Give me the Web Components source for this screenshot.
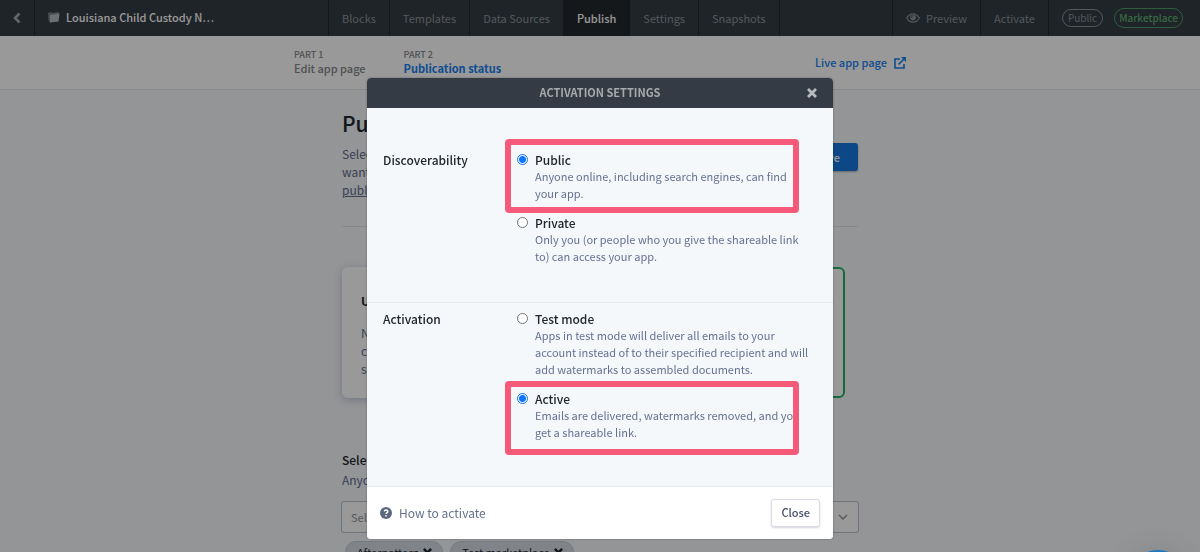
<!DOCTYPE html>
<html lang="en">
<head>
<meta charset="utf-8">
<meta name="viewport" content="width=device-width, initial-scale=1">
<title>Activation settings</title>
<style>
  html, body { margin: 0; height: 100%; overflow: hidden; }
  body { background: #f6f8fb; color: #20262c; font: 400 12px/17px "Noto Sans CJK SC", "Open Sans", sans-serif; }
</style>
</head>
<body>
<builder-nav></builder-nav>
<part-nav></part-nav>
<publish-page></publish-page>
<modal-dialog heading="Activation settings">
  <settings-section label="Discoverability" style="--pad: 44px 16px 37px">
    <radio-option name="disc" label="Public" checked marked style="--mark-top: -13px">Anyone online, including search engines, can find<br>your app.</radio-option>
    <radio-option name="disc" label="Private">Only you (or people who you give the shareable link<br>to) can access your app.</radio-option>
  </settings-section>
  <settings-section label="Activation" style="--pad: 8px 16px 45px">
    <radio-option name="act" label="Test mode">Apps in test mode will deliver all emails to your<br>account instead of to their specified recipient and will<br>add watermarks to assembled documents.</radio-option>
    <radio-option name="act" label="Active" checked marked style="--mark-top: -10px">Emails are delivered, watermarks removed, and you<br>get a shareable link.</radio-option>
  </settings-section>
</modal-dialog>
<chat-launcher></chat-launcher>

<script>
const define = (name, html) => customElements.define(name, class extends HTMLElement {
  constructor() {
    super();
    this.attachShadow({ mode: "open" }).innerHTML = typeof html === "function" ? html(this) : html;
  }
});
const cross = (size) => `<svg width="${size}" height="${size}" viewBox="0 0 10 10" aria-hidden="true"><path d="M2 2l6 6M8 2l-6 6" stroke="currentColor" stroke-width="2.8" stroke-linecap="square" fill="none"/></svg>`;

define("nav-tab", `
<style>
  :host { display: flex; border-right: 1px solid #23282d; font-size: 11px; }
  a { display: flex; align-items: center; gap: 6px; padding: 0 13px; color: #8d9398; text-decoration: none; }
  :host([active]) a { background: #23282d; color: #fff; font-weight: 500; }
</style>
<a href="#"><slot></slot></a>`);

define("status-pill", `
<style>
  :host { display: block; box-sizing: border-box; border: 1px solid #8d9398; color: #8d9398; border-radius: 10px; padding: 0 5px; font-size: 10px; line-height: 16px; }
  :host([kind=market]) { border-color: #4f9d68; color: #5fae74; padding: 0 4px; line-height: 18px; font-weight: 500; }
</style><slot></slot>`);

define("builder-nav", `
<style>
  :host { display: flex; height: 36px; background: #343c44; color: #8d9398; }
  .title { flex: 0 0 294px; box-sizing: border-box; display: flex; align-items: center; gap: 6px; padding: 0 0 2px 12px; border-right: 1px solid #23282d; color: #fff; font-size: 11px; font-weight: 500; }
  nav { display: flex; }
  .right { margin-left: auto; border-left: 1px solid #23282d; }
  .pills { display: flex; align-items: center; gap: 11px; padding: 0 17px 0 13px; }
  svg { display: block; flex: none; }
</style>
<nav-tab aria-label="Back"><svg width="8" height="12" viewBox="0 0 8 12"><path d="M6.500 1.500L2 6l4.500 4.500" fill="none" stroke="#a5a9ac" stroke-width="2.600"/></svg></nav-tab>
<div class="title"><svg width="13" height="12" viewBox="0 0 13 12"><path d="M1 2l3-1 1 1 6-1 1 1-1 8-8 1.500L1.500 10z" fill="#788087"/><path d="M3 4l9.500-1.500-1 8L3 11.500z" fill="#b4bbc0"/></svg><span>Louisiana Child Custody N…</span></div>
<nav>
  <nav-tab>Blocks</nav-tab><nav-tab>Templates</nav-tab><nav-tab>Data Sources</nav-tab><nav-tab active>Publish</nav-tab><nav-tab>Settings</nav-tab><nav-tab>Snapshots</nav-tab>
</nav>
<nav class="right">
  <nav-tab><svg width="14" height="10" viewBox="0 0 14 10"><path d="M.7 5C2.200 2.300 4.400.8 7 .8S11.800 2.300 13.300 5C11.800 7.700 9.600 9.200 7 9.200S2.200 7.700.7 5z" fill="none" stroke="currentColor" stroke-width="1.300"/><circle cx="7" cy="4.600" r="2.900" fill="currentColor"/><path d="M5.300 4.500A1.700 1.700 0 0 1 7 2.900" stroke="#343c44" fill="none" stroke-width=".8"/></svg>Preview</nav-tab>
  <nav-tab>Activate</nav-tab>
  <div class="pills"><status-pill>Public</status-pill><status-pill kind="market">Marketplace</status-pill></div>
</nav>`);

define("part-nav", `
<style>
  :host { display: block; background: #fff; border-bottom: 1px solid #e4e7ea; }
  nav { max-width: 612px; height: 53px; margin: 0 auto; display: flex; gap: 38px; align-items: center; }
  a { color: #858789; text-decoration: none; font-size: 11px; font-weight: 500; line-height: 15px; padding-bottom: 1px; }
  small { display: block; font-size: 9px; line-height: 13px; color: #858789; }
  .on, .live { color: #1880f0; }
  .on { font-weight: 700; }
  .on small { font-weight: 500; }
  .live { margin-left: auto; padding: 0; display: flex; gap: 7px; align-items: center; }
</style>
<nav>
  <a href="#"><small>PART 1</small>Edit app page</a>
  <a href="#" class="on"><small>PART 2</small>Publication status</a>
  <a href="#" class="live">Live app page<svg width="12" height="12" viewBox="0 0 12 12" fill="none" stroke="currentColor" stroke-width="1.600"><path d="M6 2H1v9h9V7M4.500 7.500L10.500 1.500"/><path d="M7 0h5v5z" fill="currentColor" stroke="none"/></svg></a>
</nav>`);

define("choice-card", `
<style>
  :host { display: block; box-sizing: border-box; height: 131px; padding: 24px 19px; background: #fff; border-radius: 6px; box-shadow: 0 2px 8px rgba(60,80,120,.3); color: #5f6b8c; line-height: 18px; }
  :host([selected]) { border: 2px solid #20b26b; box-shadow: none; }
  b { display: block; color: #20262c; line-height: 20px; margin-bottom: 13px; }
</style><b><slot name="title"></slot></b><slot></slot>`);

define("tag-chip", `
<style>
  :host { display: flex; align-items: center; gap: 4px; height: 22px; padding: 0 10px 0 11px; border-radius: 11px; background: #d5dde3; border: 1px solid #c3ccd3; box-sizing: border-box; font-size: 11px; }
  button { border: 0; padding: 0; background: none; color: inherit; display: flex; }
</style><slot></slot><button aria-label="Remove">${cross(9)}</button>`);

define("publish-page", `
<style>
  :host { display: block; max-width: 518px; margin: 0 auto; padding-top: 18px; }
  header { display: flex; justify-content: space-between; align-items: flex-start; height: 119px; border-bottom: 1px solid #e0e4e9; box-sizing: border-box; margin: 0 1px; }
  h1 { font-size: 21px; line-height: 30px; font-weight: 500; margin: 0 0 7px; }
  p { margin: 0; color: #5f6b8c; line-height: 18px; }
  p a { color: inherit; }
  .save { font: inherit; font-size: 11px; font-weight: 500; color: #fff; background: #1478e0; border: 0; border-radius: 3px; height: 28px; margin-top: 35px; padding: 0 18px; box-shadow: 0 1px 2px rgba(0,0,0,.3); }
  .cards { display: grid; grid-template-columns: 1fr 1fr; gap: 16px; margin: 40px 14px 52px 1px; }
  label, .help { display: block; line-height: 20px; margin-left: 1px; }
  label { font-weight: 500; }
  .pick { position: relative; margin-top: 11px; }
  select { appearance: none; width: 100%; height: 32px; padding: 0 9px; background: #fff; color: #8e9499; border: 1px solid #bcc3cb; border-radius: 3px; font: inherit; font-size: 11px; display: block; }
  .pick svg { position: absolute; right: 11px; top: 13px; }
  .chips { display: flex; gap: 7px; padding: 8px 4px; }
</style>
<header><div><h1>Publish</h1><p>Select<br>want to<br><a href="#">publish</a></p></div><button class="save">Save</button></header>
<div class="cards">
  <choice-card><span slot="title">Use</span>No<br>co<br>so</choice-card>
  <choice-card selected></choice-card>
</div>
<label for="market">Select</label>
<p class="help">Anyone</p>
<div class="pick"><select id="market"><option>Select</option></select><svg width="10" height="7" viewBox="0 0 10 7"><path d="M1 1l4 4 4-4" fill="none" stroke="#8e9499" stroke-width="1.400"/></svg></div>
<div class="chips"><tag-chip>Afterpattern</tag-chip><tag-chip>Test marketplace</tag-chip></div>`);

define("modal-dialog", el => `
<style>
  :host { position: fixed; inset: 0; display: flex; align-items: flex-start; justify-content: center; padding-top: 78px; background: rgba(0,0,0,.4); }
  section { width: 466px; max-width: 100%; border-radius: 4px; overflow: hidden; background: #f4f8fb; box-shadow: 0 0 2px rgba(0,0,0,.4); }
  header { display: grid; grid-template-columns: 30px 1fr 30px; align-items: center; height: 30px; padding: 0 6px; background: #343b44; color: #a6aaae; }
  h2 { grid-column: 2; margin: 0; padding-bottom: 1px; font-size: 11px; font-weight: 700; text-align: center; text-transform: uppercase; }
  .x { border: 0; background: none; color: #b9bcc0; padding: 0; display: grid; place-items: center; }
  footer { display: flex; justify-content: space-between; align-items: center; height: 52px; padding: 0 13px; background: #fff; border-top: 1px solid #e6ebf0; }
  footer a { display: flex; align-items: center; gap: 7px; color: #67718a; text-decoration: none; }
  footer a span { padding-bottom: 2px; }
  .close { font: inherit; font-size: 11px; font-weight: 500; color: #464d66; background: #fff; border: 1px solid #dadce4; border-radius: 3px; height: 28px; padding: 0 9px 1px; box-shadow: 0 1px 2px rgba(40,40,80,.2); }
</style>
<section role="dialog" aria-modal="true">
  <header><h2>${el.getAttribute("heading")}</h2><button class="x" aria-label="Dismiss">${cross(10)}</button></header>
  <slot></slot>
  <footer><a href="#"><svg width="12" height="12" viewBox="0 0 11 11"><circle cx="5.500" cy="5.500" r="5.500" fill="#5c6780"/><path d="M3.900 4.100c.2-1 .8-1.400 1.600-1.400 1 0 1.700.6 1.700 1.400 0 1.100-1.600 1.100-1.600 2.300" fill="none" stroke="#fff" stroke-width="1.300"/><circle cx="5.500" cy="8.100" r=".8" fill="#fff"/></svg><span>How to activate</span></a><button class="close">Close</button></footer>
</section>`);

define("settings-section", el => `
<style>
  :host { display: grid; grid-template-columns: 134px 1fr; padding: var(--pad); }
  :host(:first-of-type) { border-bottom: 1px solid #e6ebf0; }
  h3 { margin: 0; font: inherit; font-weight: 500; line-height: 16px; }
  .options { display: grid; gap: 13px; }
</style>
<h3>${el.getAttribute("label")}</h3><div class="options" role="radiogroup" aria-label="${el.getAttribute("label")}"><slot></slot></div>`);

define("radio-option", el => `
<style>
  :host { display: block; position: relative; }
  label { display: grid; grid-template-columns: 12px 1fr; column-gap: 6px; }
  input { appearance: none; box-sizing: border-box; width: 11px; height: 11px; margin: 2px 0 0; border: 1px solid #767676; border-radius: 50%; background: #fff; }
  input:checked { border-color: #0d75ff; background: radial-gradient(circle, #0d75ff 3px, #fff 4px); }
  b { font-weight: 500; line-height: 16px; }
  .desc { grid-column: 2; color: #65718f; font-size: 11px; white-space: nowrap; }
  :host([marked])::after { content: ""; position: absolute; box-sizing: border-box; left: -12px; right: 18px; top: var(--mark-top); height: 74px; border: 6px solid #f55a78; border-radius: 4px; pointer-events: none; }
</style>
<label><input type="radio" name="${el.getAttribute("name")}" ${el.hasAttribute("checked") ? "checked" : ""}><b>${el.getAttribute("label")}</b><span class="desc"><slot></slot></span></label>`);

define("chat-launcher", `
<style>
  :host { position: fixed; right: 12px; bottom: -58px; }
  button { display: block; width: 60px; height: 60px; border: 0; border-radius: 50%; background: #1f78c0; box-shadow: 0 1px 30px rgba(0,0,0,.12); }
</style><button aria-label="Open chat"></button>`);
</script>
</body>
</html>
